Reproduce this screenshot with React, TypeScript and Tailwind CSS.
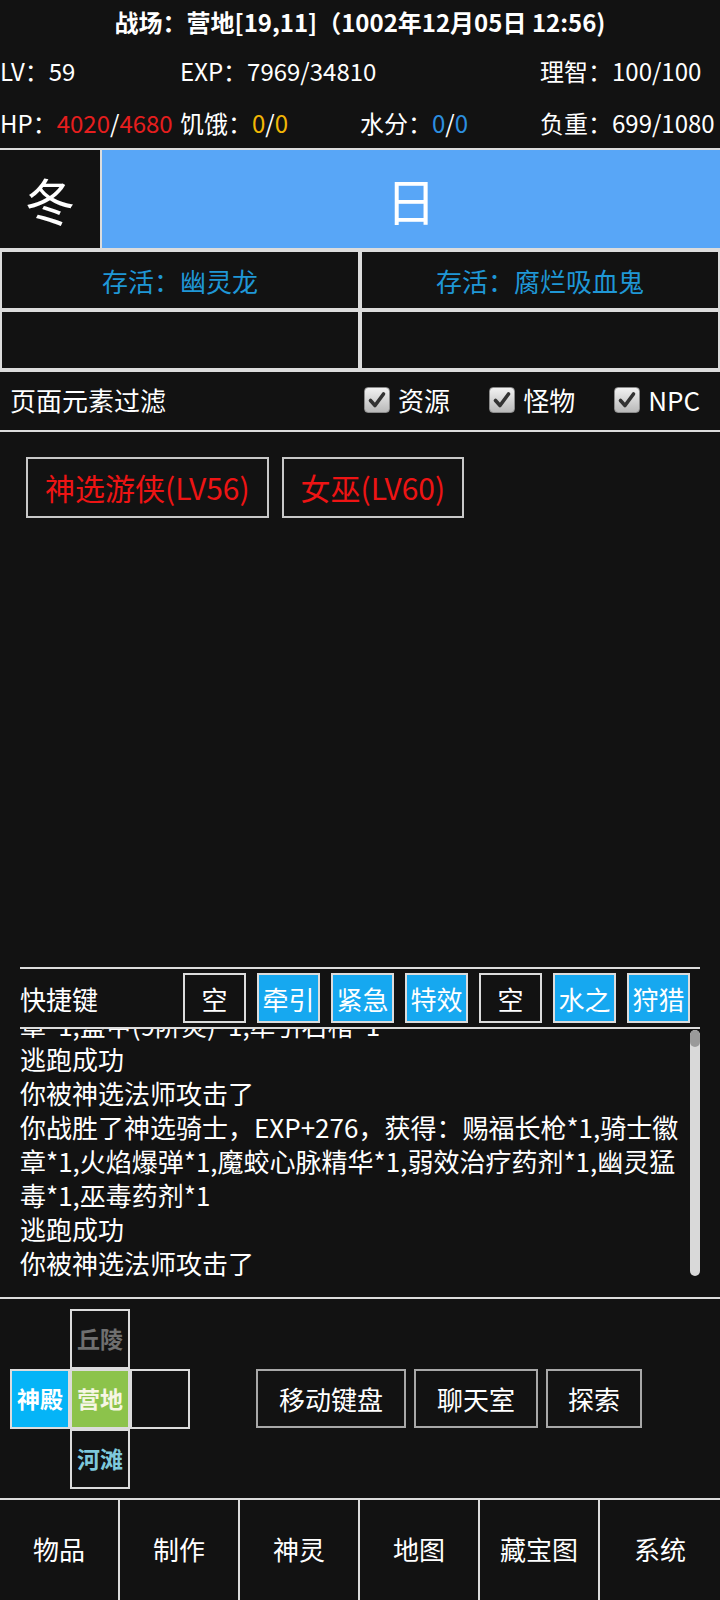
import React from 'react';

const line = 'border-[#dcdcdc]';

function Check({ label }: { label: string }) {
  return (
    <div className="flex items-center gap-[8px]">
      <div className="w-[26px] h-[26px] rounded-[4px] border border-[#8a8a8a] bg-gradient-to-b from-[#f2f2f2] to-[#b9b9b9] flex items-center justify-center">
        <svg width="20" height="20" viewBox="0 0 20 20">
          <path d="M3.5 10.5 L8 15.5 L16.5 4" fill="none" stroke="#333" strokeWidth="3.6" strokeLinecap="round" strokeLinejoin="round" />
        </svg>
      </div>
      <span>{label}</span>
    </div>
  );
}

export default function App() {
  const shortcuts = [
    { t: '空', on: false },
    { t: '牵引', on: true },
    { t: '紧急', on: true },
    { t: '特效', on: true },
    { t: '空', on: false },
    { t: '水之', on: true },
    { t: '狩猎', on: true },
  ];

  const logs = [
    '章*1,盔甲(9阶炎)*1,牵引石棺*1',
    '逃跑成功',
    '你被神选法师攻击了',
    '你战胜了神选骑士，EXP+276，获得：赐福长枪*1,骑士徽章*1,火焰爆弹*1,魔蛟心脉精华*1,弱效治疗药剂*1,幽灵猛毒*1,巫毒药剂*1',
    '逃跑成功',
    '你被神选法师攻击了',
  ];

  const nav = ['物品', '制作', '神灵', '地图', '藏宝图', '系统'];

  return (
    <div className="w-[720px] h-[1600px] bg-[#121212] text-white overflow-hidden flex flex-col font-['Noto_Sans_CJK_SC','Noto_Sans',sans-serif]">
      {/* status header */}
      <div className="h-[44px] flex items-center justify-center text-[24px] font-bold whitespace-nowrap">
        战场：营地[19,11]（1002年12月05日 12:56)
      </div>
      <div className="grid grid-cols-4 h-[53px] items-center text-[24px] whitespace-nowrap">
        <div>LV：59</div>
        <div className="col-span-2">EXP：7969/34810</div>
        <div>理智：100/100</div>
      </div>
      <div className="grid grid-cols-4 h-[51px] items-center text-[24px] whitespace-nowrap">
        <div>
          HP：<span className="text-[#e61e1e]">4020</span>/<span className="text-[#e61e1e]">4680</span>
        </div>
        <div>
          饥饿：<span className="text-[#f2b705]">0</span>/<span className="text-[#f2b705]">0</span>
        </div>
        <div>
          水分：<span className="text-[#2c8fe0]">0</span>/<span className="text-[#2c8fe0]">0</span>
        </div>
        <div>负重：699/1080</div>
      </div>

      {/* season / time */}
      <div className={`flex h-[102px] border-y-2 ${line}`}>
        <div className={`w-[102px] flex items-center justify-center text-[50px] border-r-2 ${line}`}>冬</div>
        <div className="flex-1 bg-[#58a6f7] flex items-center justify-center text-[50px]">日</div>
      </div>

      {/* survivors */}
      <div className="grid grid-cols-2 text-[26px] text-[#1f97d6]">
        <div className={`h-[60px] border-2 ${line} flex items-center justify-center`}>存活：幽灵龙</div>
        <div className={`h-[60px] border-2 ${line} flex items-center justify-center`}>存活：腐烂吸血鬼</div>
        <div className={`h-[60px] border-2 ${line}`} />
        <div className={`h-[60px] border-2 ${line}`} />
      </div>

      {/* filter */}
      <div className={`h-[62px] border-y-2 ${line} flex items-center justify-between pl-[10px] pr-[20px] pb-[3px] text-[26px]`}>
        <span>页面元素过滤</span>
        <div className="flex items-center gap-[39px]">
          <Check label="资源" />
          <Check label="怪物" />
          <Check label="NPC" />
        </div>
      </div>

      {/* monsters */}
      <div className="h-[535px] pt-[25px] pl-[26px] flex items-start gap-[13px]">
        <button className="h-[61px] px-[17px] border-2 border-[#c8c8c8] text-[30px] text-[#ee1414]">神选游侠(LV56)</button>
        <button className="h-[61px] px-[17px] border-2 border-[#c8c8c8] text-[30px] text-[#ee1414]">女巫(LV60)</button>
      </div>

      {/* shortcuts + log */}
      <div className={`h-[332px] border-b-2 ${line}`}>
        <div className={`mx-[20px] border-t-2 ${line}`}>
          <div className="h-[58px] flex items-center text-[26px]">
            <span>快捷键</span>
            <div className="ml-auto pr-[10px] flex gap-[11px]">
              {shortcuts.map((s, i) => (
                <div
                  key={i}
                  className={`w-[63px] h-[50px] border-2 ${line} flex items-center justify-center ${s.on ? 'bg-[#16a8f0]' : 'bg-[#121212]'}`}
                >
                  {s.t}
                </div>
              ))}
            </div>
          </div>
          <div className={`relative h-[253px] border-t-2 ${line} overflow-hidden`}>
            <div className="absolute left-0 right-[14px] bottom-0 text-[26px] leading-[34px]">
              {logs.map((l, i) => (
                <div key={i}>{l}</div>
              ))}
            </div>
            <div className="absolute right-0 top-[1px] w-[10px] h-[246px] rounded-[5px] bg-[#d9d9d9] overflow-hidden">
              <div className="h-[17px] bg-[#9a9a9a] rounded-[5px]" />
            </div>
          </div>
        </div>
      </div>

      {/* map + actions */}
      <div className="h-[199px] flex items-center px-[10px]">
        <div className="grid grid-cols-[60px_60px_60px] grid-rows-[60px_60px_60px] text-[23px] font-bold">
          <div />
          <div className={`border-2 ${line} flex items-center justify-center text-[#6f6f6f]`}>丘陵</div>
          <div />
          <div className={`border-2 ${line} bg-[#05b4f7] flex items-center justify-center`}>神殿</div>
          <div className={`border-2 ${line} bg-[#8cc34b] flex items-center justify-center text-[#f6f6e4]`}>营地</div>
          <div className={`border-2 ${line}`} />
          <div />
          <div className={`border-2 ${line} flex items-center justify-center text-[#7ec8dc]`}>河滩</div>
          <div />
        </div>
        <div className="ml-[66px] flex gap-[8px] text-[26px]">
          <button className="w-[150px] h-[59px] border-2 border-[#a8a8a8]">移动键盘</button>
          <button className="w-[124px] h-[59px] border-2 border-[#a8a8a8]">聊天室</button>
          <button className="w-[96px] h-[59px] border-2 border-[#a8a8a8]">探索</button>
        </div>
      </div>

      {/* bottom nav */}
      <div className={`grid grid-cols-6 border-t-2 ${line} text-[26px]`}>
        {nav.map((n, i) => (
          <div
            key={n}
            className={`h-[100px] pb-[3px] flex items-center justify-center ${i < nav.length - 1 ? `border-r-2 ${line}` : ''}`}
          >
            {n}
          </div>
        ))}
      </div>
    </div>
  );
}
